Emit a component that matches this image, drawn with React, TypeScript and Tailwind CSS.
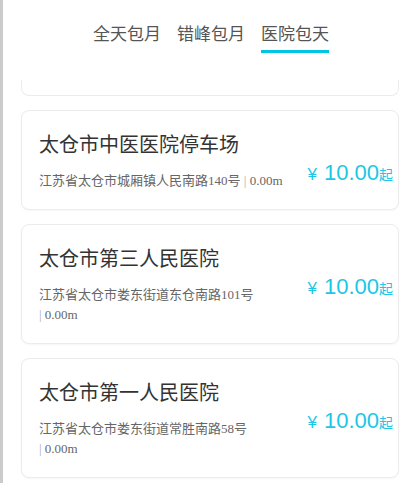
import { useState } from "react";

const tabs = ["全天包月", "错峰包月", "医院包天"];

const lots = [
  { name: "太仓市中医医院停车场", addr: "江苏省太仓市城厢镇人民南路140号", dist: "0.00m", price: "10.00" },
  { name: "太仓市第三人民医院", addr: "江苏省太仓市娄东街道东仓南路101号", dist: "0.00m", price: "10.00" },
  { name: "太仓市第一人民医院", addr: "江苏省太仓市娄东街道常胜南路58号", dist: "0.00m", price: "10.00" },
];

const sans = "font-['Liberation_Sans','Noto_Sans_CJK_SC',sans-serif]";

const LotCard = ({ lot }: { lot: (typeof lots)[number] }) => (
  <div className="flex items-start rounded-lg border border-[#ececec] bg-white pt-[20px] pb-[18px] pl-[17px] pr-[5px] shadow-[0_1px_2px_rgba(0,0,0,0.04)]">
    <div className="w-[248px]">
      <div className={`${sans} text-[20px] leading-[28px] text-[#333]`}>{lot.name}</div>
      <div className="mt-[12px] font-['Liberation_Serif','Noto_Sans_CJK_SC',serif] text-[13px] leading-[20px] text-[#666]">
        {lot.addr}{" "}
        <span className="whitespace-nowrap">
          <span className="text-[#aaa]">|</span> {lot.dist}
        </span>
      </div>
    </div>
    <div className={`${sans} ml-auto mt-[27px] flex items-baseline leading-[30px] text-[#1cc6e6]`}>
      <span className="mr-[7px] text-[17px]">¥</span>
      <span className="text-[22px]">{lot.price}</span>
      <span className="text-[14px]">起</span>
    </div>
  </div>
);

const App = () => {
  const [active, setActive] = useState(2);

  return (
    <div className="flex min-h-screen bg-white">
      <div className="w-[3px] shrink-0 bg-[#cbcbcb]" />
      <div className="flex-1">
        <div className="flex h-[80px] justify-center pl-[8px] pt-[23px]">
          {tabs.map((t, i) => (
            <button
              key={t}
              onClick={() => setActive(i)}
              className={`${sans} flex h-[30px] flex-col items-center px-[8px] text-[17px] leading-[24px] text-[#555]`}
            >
              <span>{t}</span>
              <span className={`mt-[3px] h-[3px] w-full ${active === i ? "bg-[#00c4e4]" : "bg-transparent"}`} />
            </button>
          ))}
        </div>
        <div className="ml-[18px] mr-[12px] flex flex-col gap-[14px]">
          <div className="h-[16px] rounded-b-lg border border-t-0 border-[#ececec] bg-white" />
          {lots.map((l) => (
            <LotCard key={l.name} lot={l} />
          ))}
        </div>
      </div>
    </div>
  );
};

export default App;
